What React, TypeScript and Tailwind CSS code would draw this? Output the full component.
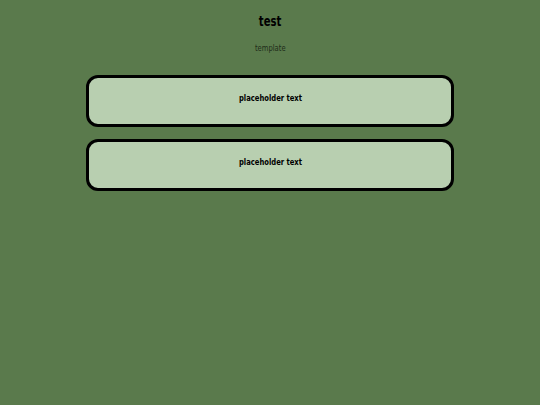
import React from "react";

const cards = ["placeholder text", "placeholder text"];

const App = () => {
  return (
    <div
      className="min-h-[405px] w-full bg-[#5a7a4c] pt-[12px] flex flex-col items-center"
      style={{ fontFamily: '"DejaVu Sans Condensed", "DejaVu Sans", sans-serif' }}
    >
      <h1 className="text-[14px] font-bold leading-[18px] text-black [font-stretch:condensed] scale-x-[0.8]">test</h1>
      <p className="mt-[12px] text-[9px] leading-[12px] text-[#1f2d1a] [font-stretch:condensed] scale-x-[0.84]">template</p>
      <div className="mt-[21px] flex w-[368px] flex-col gap-[12px]">
        {cards.map((label, index) => (
          <div
            key={index}
            className="flex h-[52px] justify-center rounded-[12px] border-[3px] border-black bg-[#b8cfb0] pt-[14px]"
          >
            <span className="inline-block h-[12px] text-[9px] leading-[12px] font-bold text-black [font-stretch:condensed] scale-x-[0.84]">
              {label}
            </span>
          </div>
        ))}
      </div>
    </div>
  );
};

export default App;
